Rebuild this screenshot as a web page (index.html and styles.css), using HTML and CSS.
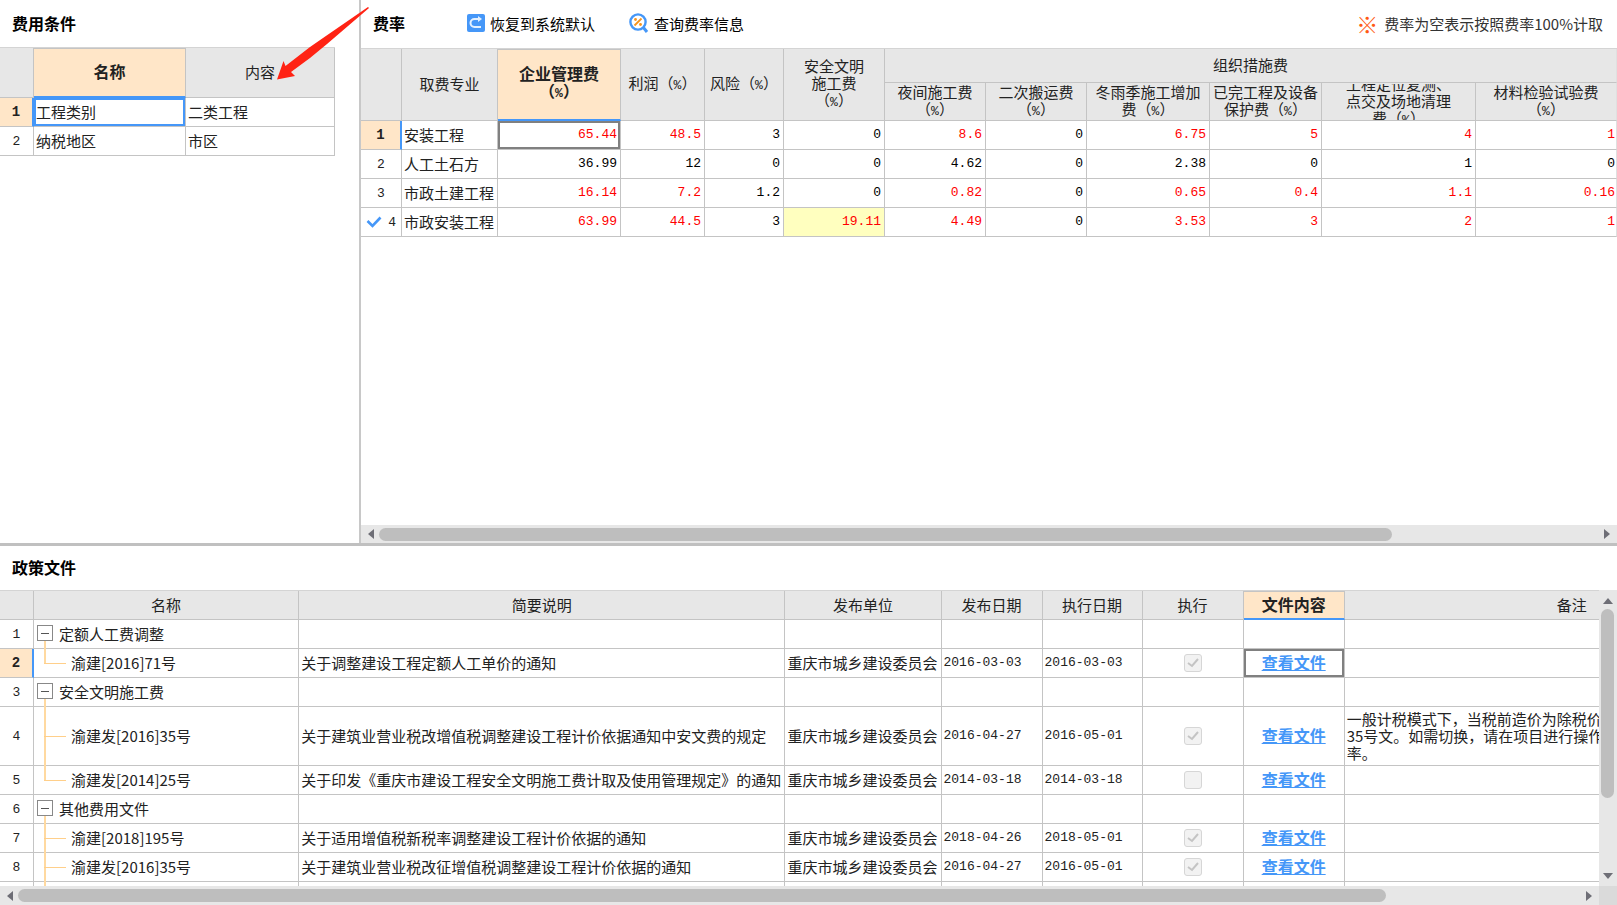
FILE: index.html
```
<!DOCTYPE html>
<html lang="zh-CN">
<head>
<meta charset="utf-8">
<title>费率</title>
<link rel="stylesheet" href="styles.css">
</head>
<body>
<main class="app">
  <div class="top">
    <section class="panel conditions">
      <header class="bar"><h2>费用条件</h2></header>
      <div class="view">
        <table class="grid cond-table">
          <colgroup><col class="w33"><col class="w152"><col class="w149"></colgroup>
          <thead><tr><th></th><th class="active">名称</th><th class="lighttext">内容</th></tr></thead>
          <tbody>
            <tr><th class="no current">1</th><td class="focus-blue">工程类别</td><td>二类工程</td></tr>
            <tr><th class="no">2</th><td>纳税地区</td><td>市区</td></tr>
          </tbody>
        </table>
      </div>
    </section>
    <section class="panel rates">
      <header class="bar">
        <h2>费率</h2>
        <button class="tool restore" type="button">
          <svg width="18" height="18" viewBox="0 0 18 18"><rect width="18" height="18" rx="2" fill="#4597f8"/><path d="M14 13H7.500a4 4 0 0 1 0-8H12" fill="none" stroke="#e4f1ff" stroke-width="2"/><path d="M11 2l4 3-4 3z" fill="#e4f1ff"/></svg>
          恢复到系统默认
        </button>
        <button class="tool" type="button">
          <svg width="20" height="20" viewBox="0 0 20 20"><circle cx="9" cy="9" r="7.600" fill="#fff" stroke="#4597f8" stroke-width="2.400"/><path d="M14 14l4 5" stroke="#4597f8" stroke-width="3"/><path d="M12.500 5.500l-7 7" stroke="#f7941d" stroke-width="1.800"/><circle cx="6.500" cy="6.500" r="1.400" fill="#f7941d"/><circle cx="11.500" cy="11.500" r="1.400" fill="#f7941d"/></svg>
          查询费率信息
        </button>
        <p class="note"><span class="mark">※</span>费率为空表示按照费率100%计取</p>
      </header>
      <div class="view">
        <table class="grid rate-table">
          <colgroup><col class="w41"><col class="w96"><col class="w123"><col class="w84"><col class="w79"><col class="w101"><col class="w101"><col class="w101"><col class="w123"><col class="w112"><col class="w154"><col></colgroup>
          <thead>
            <tr class="h1"><th rowspan="2"></th><th rowspan="2">取费专业</th><th rowspan="2" class="active">企业管理费<br>（<span class="pct">%</span>）</th><th rowspan="2">利润（<span class="pct">%</span>）</th><th rowspan="2">风险（<span class="pct">%</span>）</th><th rowspan="2">安全文明<br>施工费<br>（<span class="pct">%</span>）</th><th colspan="6">组织措施费</th></tr>
            <tr class="h2"><th>夜间施工费<br>（<span class="pct">%</span>）</th><th>二次搬运费<br>（<span class="pct">%</span>）</th><th>冬雨季施工增加<br>费（<span class="pct">%</span>）</th><th>已完工程及设备<br>保护费（<span class="pct">%</span>）</th><th><div class="clip"><div>工程定位复测、<br>点交及场地清理<br>费（<span class="pct">%</span>）</div></div></th><th>材料检验试验费<br>（<span class="pct">%</span>）</th></tr>
          </thead>
          <tbody>
            <tr><th class="no current">1</th><td>安装工程</td><td class="num red focus-gray">65.44</td><td class="num red">48.5</td><td class="num">3</td><td class="num">0</td><td class="num red">8.6</td><td class="num">0</td><td class="num red">6.75</td><td class="num red">5</td><td class="num red">4</td><td class="num red">1</td></tr>
            <tr><th class="no">2</th><td>人工土石方</td><td class="num">36.99</td><td class="num">12</td><td class="num">0</td><td class="num">0</td><td class="num">4.62</td><td class="num">0</td><td class="num">2.38</td><td class="num">0</td><td class="num">1</td><td class="num">0</td></tr>
            <tr><th class="no">3</th><td>市政土建工程</td><td class="num red">16.14</td><td class="num red">7.2</td><td class="num">1.2</td><td class="num">0</td><td class="num red">0.82</td><td class="num">0</td><td class="num red">0.65</td><td class="num red">0.4</td><td class="num red">1.1</td><td class="num red">0.16</td></tr>
            <tr><th class="no"><span class="ticked"><svg width="16" height="12" viewBox="0 0 16 12"><path d="M1.500 5l5 5 8-8.500" fill="none" stroke="#4597f8" stroke-width="2.600"/></svg>4</span></th><td>市政安装工程</td><td class="num red">63.99</td><td class="num red">44.5</td><td class="num">3</td><td class="num red yellow">19.11</td><td class="num red">4.49</td><td class="num">0</td><td class="num red">3.53</td><td class="num red">3</td><td class="num red">2</td><td class="num red">1</td></tr>
          </tbody>
        </table>
      </div>
      <div class="hscroll"><span class="arrow left"></span><div class="track"><div class="thumb thumb-rates"></div></div><span class="arrow right"></span></div>
    </section>
  </div>

  <section class="panel policy">
    <header class="bar low"><h2>政策文件</h2></header>
    <div class="policy-body">
      <div class="view">
        <table class="grid policy-table">
          <colgroup><col class="w34"><col class="w265"><col class="w486"><col class="w156"><col class="w101"><col class="w100"><col class="w101"><col class="w101"><col class="w455"></colgroup>
          <thead><tr><th></th><th>名称</th><th>简要说明</th><th>发布单位</th><th>发布日期</th><th>执行日期</th><th>执行</th><th class="active">文件内容</th><th>备注</th></tr></thead>
          <tbody>
            <tr><th class="no">1</th><td class="tree"><div class="node open"><button type="button" class="toggle" aria-label="折叠"></button>定额人工费调整</div></td><td></td><td></td><td></td><td></td><td></td><td></td><td></td></tr>
            <tr><th class="no current">2</th><td class="tree"><div class="node leaf last">渝建[2016]71号</div></td><td>关于调整建设工程定额人工单价的通知</td><td>重庆市城乡建设委员会</td><td class="date">2016-03-03</td><td class="date">2016-03-03</td><td class="check"><input type="checkbox" aria-label="执行" checked disabled></td><td class="link focus-gray"><a href="#">查看文件</a></td><td></td></tr>
            <tr><th class="no">3</th><td class="tree"><div class="node open"><button type="button" class="toggle" aria-label="折叠"></button>安全文明施工费</div></td><td></td><td></td><td></td><td></td><td></td><td></td><td></td></tr>
            <tr class="tall"><th class="no">4</th><td class="tree"><div class="node leaf">渝建发[2016]35号</div></td><td>关于建筑业营业税改增值税调整建设工程计价依据通知中安文费的规定</td><td>重庆市城乡建设委员会</td><td class="date">2016-04-27</td><td class="date">2016-05-01</td><td class="check"><input type="checkbox" aria-label="执行" checked disabled></td><td class="link"><a href="#">查看文件</a></td><td class="remark">一般计税模式下，当税前造价为除税价<br>35号文。如需切换，请在项目进行操作<br>率。</td></tr>
            <tr><th class="no">5</th><td class="tree"><div class="node leaf last">渝建发[2014]25号</div></td><td>关于印发《重庆市建设工程安全文明施工费计取及使用管理规定》的通知</td><td>重庆市城乡建设委员会</td><td class="date">2014-03-18</td><td class="date">2014-03-18</td><td class="check"><input type="checkbox" aria-label="执行" disabled></td><td class="link"><a href="#">查看文件</a></td><td></td></tr>
            <tr><th class="no">6</th><td class="tree"><div class="node open"><button type="button" class="toggle" aria-label="折叠"></button>其他费用文件</div></td><td></td><td></td><td></td><td></td><td></td><td></td><td></td></tr>
            <tr><th class="no">7</th><td class="tree"><div class="node leaf">渝建[2018]195号</div></td><td>关于适用增值税新税率调整建设工程计价依据的通知</td><td>重庆市城乡建设委员会</td><td class="date">2018-04-26</td><td class="date">2018-05-01</td><td class="check"><input type="checkbox" aria-label="执行" checked disabled></td><td class="link"><a href="#">查看文件</a></td><td></td></tr>
            <tr><th class="no">8</th><td class="tree"><div class="node leaf">渝建发[2016]35号</div></td><td>关于建筑业营业税改征增值税调整建设工程计价依据的通知</td><td>重庆市城乡建设委员会</td><td class="date">2016-04-27</td><td class="date">2016-05-01</td><td class="check"><input type="checkbox" aria-label="执行" checked disabled></td><td class="link"><a href="#">查看文件</a></td><td></td></tr>
            <tr><th class="no"></th><td class="tree"><div class="node stem"></div></td><td></td><td></td><td></td><td></td><td></td><td></td><td></td></tr>
          </tbody>
        </table>
      </div>
      <div class="vscroll"><span class="arrow up"></span><div class="track"><div class="thumb"></div></div><span class="arrow down"></span></div>
      <div class="hscroll"><span class="arrow left"></span><div class="track"><div class="thumb thumb-policy"></div></div><span class="arrow right"></span></div>
      <div class="corner"></div>
    </div>
  </section>
  <svg class="pointer" width="100" height="82" viewBox="0 0 100 82"><path d="M98 7L99 8L57 44L40 58L21 72L25 76L7 79.500L13.500 61L15.500 66L40 47L53 38Z" fill="#ff2314"/></svg>
</main>
</body>
</html>
```

FILE: styles.css
```
* { box-sizing: border-box; }
html, body { height: 100%; margin: 0; }
body {
  background: #fff;
  color: #222;
  font: 15px/17px "Noto Sans CJK SC", sans-serif;
  overflow: hidden;
}
h2, p { margin: 0; }
button { font: inherit; color: inherit; border: 0; padding: 0; background: none; }

.app { height: 100%; display: flex; flex-direction: column; position: relative; }
.top { flex: 545 1 0; min-height: 0; display: flex; border-bottom: 3px solid #c0c0c0; }
.panel { display: flex; flex-direction: column; min-width: 0; min-height: 0; }
.conditions { width: 361px; flex: none; border-right: 2px solid #c8c8c8; }
.rates { flex: 1; }
.policy { flex: 360 1 0; }

.bar { display: flex; align-items: center; height: 47px; padding: 0 14px 2px 12px; color: #000; flex: none; }
.rates .bar { height: 48px; }
.bar.low { height: 44px; }
.bar h2 { font-size: 16px; line-height: 20px; font-weight: 700; }
.tool { display: flex; align-items: center; gap: 5px; margin-right: 34px; }
.restore { margin-left: 62px; }
.note { margin-left: auto; color: #333; display: flex; align-items: center; gap: 6px; }
.mark { color: #ff5a14; font-size: 22px; }

.view { flex: 1; overflow: hidden; min-width: 0; min-height: 0; }

.grid { border-collapse: separate; border-spacing: 0; table-layout: fixed; border-top: 1px solid #d4d4d4; }
.grid th, .grid td {
  height: 29px;
  padding: 0 2px 2px;
  border-right: 1px solid #c4c4c4;
  border-bottom: 1px solid #c4c4c4;
  white-space: nowrap;
  font-weight: 400;
  text-align: left;
}
.grid thead th { background: #e7e7e7; text-align: center; }
.grid thead th.active {
  background: #ffe6c8;
  font-size: 16px;
  font-weight: 700;
  border-top: 1px solid #c4c4c4;
  border-bottom: 2px solid #4597f8;
}
.grid th.no { text-align: center; padding-bottom: 0; font: 13px/17px "Liberation Mono", monospace; }
.grid th.current { background: #ffe6c8; font-weight: 700; font-size: 14px; border-right: 2px solid #4597f8; }
.grid .num, .grid .date, .pct { font-family: "Liberation Mono", monospace; font-size: 13px; }
.grid .num { text-align: right; color: #000; padding-right: 3px; }
.grid .red { color: #f00; }
.grid .yellow { background: #ffffbf; }
.focus-gray { box-shadow: inset 0 0 0 2px #808080; }
.focus-blue { box-shadow: inset 0 0 0 2px #4597f8; }

.cond-table thead th { height: 50px; }
.rate-table { width: 100%; }
.rate-table .h1 th { height: 34px; }
.rate-table .h2 th { height: 37px; padding-bottom: 0; }
.rate-table tr > :last-child { border-right-color: #e0e0e0; }
.rate-table tr > :last-child.num { padding-right: 1px; }
.clip { height: 36px; overflow: hidden; display: flex; align-items: center; justify-content: center; }
.ticked { display: flex; align-items: center; justify-content: space-between; padding: 0 3px; }

.policy-body { flex: 1; min-height: 0; display: grid; grid-template: minmax(0, 1fr) 19px / minmax(0, 1fr) 18px; }
.policy-table { width: 1800px; }
.policy-table .tall td { height: 59px; }
.grid .check, .grid .link { text-align: center; }
.grid .check { padding-bottom: 0; }
.link a { color: #4597f8; font-size: 16px; font-weight: 700; }
.check input {
  appearance: none;
  display: block;
  width: 18px;
  height: 18px;
  margin: 0 auto;
  border: 1px solid #d6d6d6;
  border-radius: 3px;
  background: #f2f2f2;
}
.check input:checked {
  background: #f2f2f2 url("data:image/svg+xml,%3Csvg xmlns='http://www.w3.org/2000/svg' viewBox='0 0 16 16'%3E%3Cpath d='M3 8l4 3 6-7' fill='none' stroke='%23c4c4c4' stroke-width='2'/%3E%3C/svg%3E");
}

.grid .tree { padding: 0; }
.node { height: 28px; display: flex; align-items: center; position: relative; padding: 0 0 2px 3px; }
.tall .node { height: 58px; }
.toggle { width: 16px; height: 16px; margin-right: 6px; border: 1px solid #888; background: linear-gradient(#555, #555) center / 8px 1px no-repeat #fff; }
.leaf { padding-left: 37px; }
.node::before { content: ""; position: absolute; left: 10px; top: 0; bottom: -1px; width: 2px; background: #ffd9a0; }
.open::before { top: 21px; }
.last::before { bottom: 50%; }
.leaf::after { content: ""; position: absolute; left: 10px; top: 50%; width: 22px; height: 1px; background: #ffcf8a; }

.hscroll, .vscroll { display: flex; align-items: center; background: #e7e7e7; }
.hscroll { height: 18px; padding: 0 7px; gap: 5px; flex: none; }
.policy .hscroll { height: 19px; }
.vscroll { flex-direction: column; padding: 8px 0 7px; gap: 5px; }
.track { flex: 1; min-height: 0; }
.thumb { height: 13px; border-radius: 7px; background: #bebebe; }
.thumb-rates { width: 83%; }
.thumb-policy { width: 87.500%; }
.vscroll .thumb { width: 13px; height: 73%; }
.vscroll .track { align-self: flex-start; padding-left: 2px; }
.arrow { width: 0; height: 0; border: 5px solid transparent; flex: none; }
.left { border-left: 0; border-right: 6px solid #6e6e76; }
.right { border-right: 0; border-left: 6px solid #6e6e76; }
.up { border-top: 0; border-bottom: 6px solid #6e6e76; }
.down { border-bottom: 0; border-top: 6px solid #6e6e76; }
.corner { background: #dadada; }

.pointer { position: absolute; left: 270px; top: 0; pointer-events: none; }

.w33 { width: 34px; } .w34 { width: 34px; } .w41 { width: 41px; }
.w79 { width: 79px; } .w84 { width: 84px; } .w96 { width: 96px; }
.w100 { width: 100px; } .w101 { width: 101px; } .w112 { width: 112px; }
.w123 { width: 123px; } .w149 { width: 149px; } .w152 { width: 152px; }
.w154 { width: 154px; } .w156 { width: 156px; } .w265 { width: 265px; }
.w455 { width: 455px; } .w486 { width: 486px; }
```
